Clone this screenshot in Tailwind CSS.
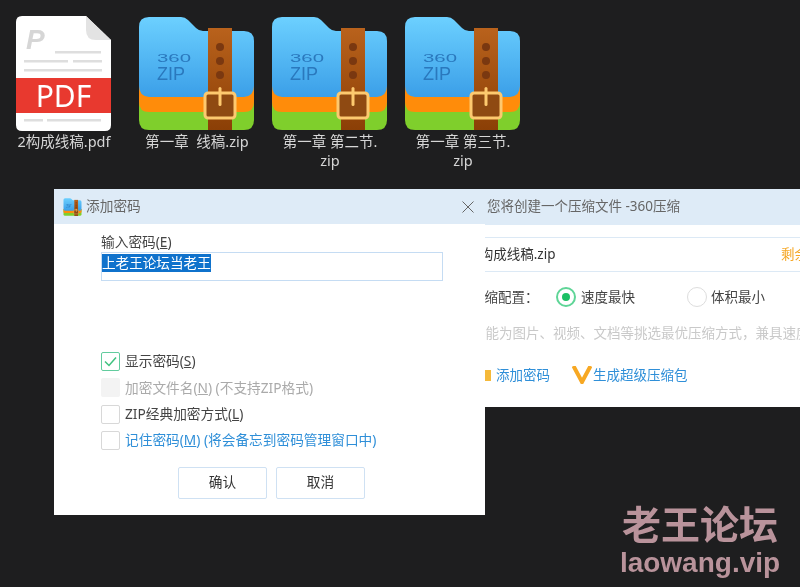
<!DOCTYPE html>
<html lang="zh-CN">
<head>
  <meta charset="UTF-8" />
  <title>添加密码</title>
  <meta name="viewport" content="width=device-width, initial-scale=1.0" />
  <script src="https://cdn.jsdelivr.net/npm/@tailwindcss/browser@4"></script>
</head>
<body class="bg-[#1e1e1f] overflow-hidden">
<div class="relative w-[800px] h-[587px] overflow-hidden blur-[0.4px] font-['Noto_Sans','Noto_Sans_CJK_SC',sans-serif]">

  <!-- shared zip icon -->
  <svg class="absolute w-0 h-0">
    <defs>
      <linearGradient id="blueFill" x1="0" y1="0" x2="0" y2="1">
        <stop offset="0" stop-color="#6cd0ff" />
        <stop offset="1" stop-color="#3b9fe8" />
      </linearGradient>
      <linearGradient id="strapFill" x1="0" y1="0" x2="0" y2="1">
        <stop offset="0" stop-color="#b9621c" />
        <stop offset="1" stop-color="#8b3f06" />
      </linearGradient>
      <symbol id="zipIcon" viewBox="0 0 115 115">
        <path d="M0 70 V104 Q0 114 10 114 H105 Q115 114 115 104 V70 Z" fill="#7fcf2c" />
        <path d="M0 70 V86 Q0 96 10 96 H105 Q115 96 115 86 V70 Z" fill="#ff8c0a" />
        <path d="M0 11 Q0 1 10 1 H42 Q46 1 49 4 L57 12 Q60 15 64 15 H105 Q115 15 115 25 V70 Q115 80 105 81 H10 Q0 80 0 70 Z" fill="url(#blueFill)" />
        <rect x="69" y="12" width="24" height="102" fill="url(#strapFill)" />
        <circle cx="81" cy="31" r="4" fill="#7a3810" />
        <circle cx="81" cy="45" r="4" fill="#7a3810" />
        <circle cx="81" cy="59" r="4" fill="#7a3810" />
        <rect x="66" y="77" width="30" height="25" rx="3" fill="#8f4a12" stroke="#fdc96f" stroke-width="3" />
        <rect x="79.5" y="71" width="3" height="19" rx="1.5" fill="#fdc96f" />
        <text x="18" y="46" font-size="11" fill="#2a78bd" textLength="34" lengthAdjust="spacingAndGlyphs" font-family="Liberation Sans">360</text>
        <text x="18" y="64" font-size="18" fill="#2a78bd" font-family="Liberation Sans">ZIP</text>
      </symbol>
    </defs>
  </svg>

  <!-- desktop icons -->
  <div class="flex gap-[15px] pl-[4px] pt-4">
    <div class="w-[118px] flex flex-col items-center">
      <svg class="w-[95px] h-[115px] block" viewBox="0 0 95 115">
        <path d="M6 0 H70 L95 24 V109 Q95 115 89 115 H6 Q0 115 0 109 V6 Q0 0 6 0 Z" fill="#ffffff" />
        <path d="M70 0 L95 24 H80 Q70 24 70 14 Z" fill="#e3e3e3" />
        <text x="10" y="33" font-size="28" font-weight="700" font-style="italic" fill="#d6d6d6" font-family="Liberation Sans">P</text>
        <g fill="#dedede">
          <rect x="39" y="35" width="46" height="2.5" />
          <rect x="8" y="44" width="44" height="2.5" />
          <rect x="57" y="44" width="29" height="2.5" />
          <rect x="8" y="53" width="78" height="2.5" />
          <rect x="8" y="103" width="19" height="2.5" />
          <rect x="31" y="103" width="54" height="2.5" />
        </g>
        <rect x="0" y="62" width="95" height="35" fill="#e8392f" />
        <text x="47.5" y="91" font-size="30" fill="#ffffff" text-anchor="middle" font-family="Noto Sans">PDF</text>
      </svg>
      <p class="text-[14.5px] leading-[19px] text-[#d6d6d6] text-center mt-[1px] pl-[2px]">2构成线稿.pdf</p>
    </div>
    <div class="w-[118px] flex flex-col items-center">
      <svg class="w-[115px] h-[115px] block"><use href="#zipIcon" /></svg>
      <p class="text-[14.5px] leading-[19px] text-[#d6d6d6] text-center mt-[1px] pl-[2px]">第一章&nbsp;&nbsp;线稿.zip</p>
    </div>
    <div class="w-[118px] flex flex-col items-center">
      <svg class="w-[115px] h-[115px] block"><use href="#zipIcon" /></svg>
      <p class="text-[14.5px] leading-[19px] text-[#d6d6d6] text-center mt-[1px] pl-[2px]">第一章 第二节.<br />zip</p>
    </div>
    <div class="w-[118px] flex flex-col items-center">
      <svg class="w-[115px] h-[115px] block"><use href="#zipIcon" /></svg>
      <p class="text-[14.5px] leading-[19px] text-[#d6d6d6] text-center mt-[1px] pl-[2px]">第一章 第三节.<br />zip</p>
    </div>
  </div>

  <!-- 360 compress window, behind the dialog -->
  <div class="absolute left-[485px] top-[189px] w-[315px] h-[218px] bg-white overflow-hidden text-[13.5px]">
    <div class="h-[36px] bg-[#deebf7] flex items-center pl-[2px] pb-[2px] text-[#666666] whitespace-nowrap">您将创建一个压缩文件 -360压缩</div>
    <div class="mt-[12px] h-[35px] border-y border-[#dce9f5] flex items-center justify-between text-[#333333] whitespace-nowrap">
      <span class="-ml-[13px]">2构成线稿.zip</span>
      <span class="text-[#f5a623] -mr-[8px]">剩余</span>
    </div>
    <div class="mt-[6px] h-[38px] flex items-center text-[#444444] whitespace-nowrap">
      <span class="w-[71px] shrink-0 -ml-[14px] mr-[14px]">压缩配置：</span>
      <span class="w-[20px] h-[20px] rounded-full border-2 border-[#5fd597] flex items-center justify-center shrink-0"><span class="w-[8px] h-[8px] rounded-full bg-[#1cc064]"></span></span>
      <span class="ml-[5px]">速度最快</span>
      <span class="w-[20px] h-[20px] rounded-full border border-[#dddddd] shrink-0 ml-[52px]"></span>
      <span class="ml-[4px]">体积最小</span>
    </div>
    <p class="mt-[7px] -ml-[13px] text-[#c9c9c9] whitespace-nowrap">智能为图片、视频、文档等挑选最优压缩方式，兼具速度</p>
    <div class="mt-[22px] h-[20px] flex items-center text-[#2f8fd8] whitespace-nowrap">
      <span class="w-[6px] h-[11px] bg-[#f5b93a] shrink-0"></span>
      <span class="ml-[5px]">添加密码</span>
      <svg class="w-[20px] h-[18px] ml-[22px] shrink-0" viewBox="0 0 20 18"><path d="M1.5 0 L10 16 L18.5 0" fill="none" stroke="#f7a823" stroke-width="4" /></svg>
      <span class="ml-[1px]">生成超级压缩包</span>
    </div>
  </div>

  <!-- add password dialog -->
  <div class="absolute left-[54px] top-[189px] w-[431px] h-[326px] bg-white text-[13.7px]">
    <div class="h-[35px] bg-[#deebf7] flex items-center pl-[9px] pr-[11px]">
      <svg class="w-[19px] h-[18px] shrink-0"><use href="#zipIcon" /></svg>
      <span class="ml-[4px] text-[#666666] flex-1">添加密码</span>
      <svg class="w-[12px] h-[12px]" viewBox="0 0 12 12"><path d="M.5 .5 L11.5 11.5 M11.5 .5 L.5 11.5" stroke="#666666" stroke-width="1" /></svg>
    </div>
    <div class="pl-[47px] pr-[42px]">
      <label class="block mt-[8px] leading-[20px] text-[#444444]">输入密码(<span class="underline">E</span>)</label>
      <div class="h-[29px] border border-[#c5dcf3] py-[1px] flex items-start">
        <span class="bg-[#0f72cc] text-white leading-[18px] h-[18px] text-[13.6px]">上老王论坛当老王</span>
      </div>
      <div class="mt-[71px] flex flex-col gap-[7.4px] text-[#444444]">
        <div class="flex items-center h-[19px]">
          <span class="w-[19px] h-[19px] rounded-[2px] border border-[#62cc9e] shrink-0 flex items-center justify-center">
            <svg class="w-[13px] h-[11px]" viewBox="0 0 13 11"><path d="M1 5.5 L5 9.5 L12 1.5" fill="none" stroke="#3fc27f" stroke-width="1.5" /></svg>
          </span>
          <span class="ml-[5px]">显示密码(<span class="underline">S</span>)</span>
        </div>
        <div class="flex items-center h-[19px] text-[#aaaaaa]">
          <span class="w-[19px] h-[19px] rounded-[2px] bg-[#f3f3f3] shrink-0"></span>
          <span class="ml-[5px]">加密文件名(<span class="underline">N</span>) (不支持ZIP格式)</span>
        </div>
        <div class="flex items-center h-[19px]">
          <span class="w-[19px] h-[19px] rounded-[2px] border border-[#d8d8d8] shrink-0"></span>
          <span class="ml-[5px]">ZIP经典加密方式(<span class="underline">L</span>)</span>
        </div>
        <div class="flex items-center h-[19px] text-[#2f8fd8]">
          <span class="w-[19px] h-[19px] rounded-[2px] border border-[#d8d8d8] shrink-0"></span>
          <span class="ml-[5px]">记住密码(<span class="underline">M</span>) (将会备忘到密码管理窗口中)</span>
        </div>
      </div>
      <div class="mt-[16.5px] ml-[77px] flex gap-[9px] text-[#333333]">
        <button class="w-[89px] h-[32px] border border-[#cfe1f3] rounded-[2px]">确认</button>
        <button class="w-[89px] h-[32px] border border-[#cfe1f3] rounded-[2px]">取消</button>
      </div>
    </div>
  </div>

  <!-- watermark -->
  <div class="absolute left-[620px] top-[501px] w-[160px] flex flex-col gap-[1px] items-center font-bold text-[#b9939b]">
    <span class="text-[39px] leading-[45px] whitespace-nowrap">老王论坛</span>
    <span class="text-[28px] leading-[32px] whitespace-nowrap font-['Liberation_Sans',sans-serif]">laowang.vip</span>
  </div>
</div>
</body>
</html>
